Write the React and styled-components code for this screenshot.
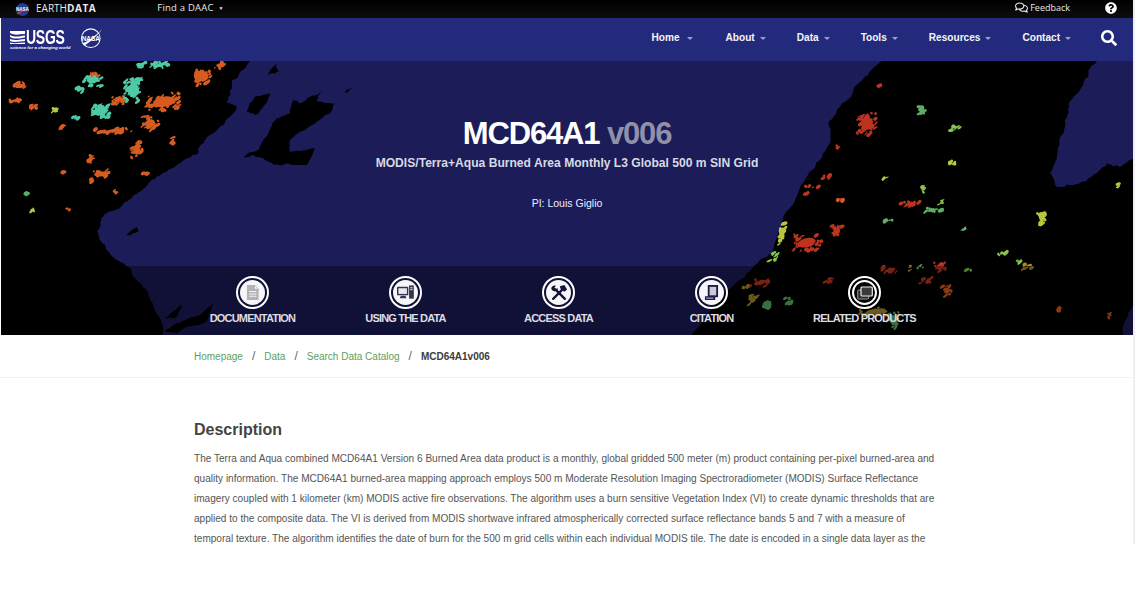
import React from "react";
import styled, { createGlobalStyle } from "styled-components";
import { FaSearch, FaQuestionCircle, FaRegComments } from "react-icons/fa";

const Global = createGlobalStyle`
  html, body { margin: 0; padding: 0; background: #fff; overflow: hidden; }
  body { font-family: "Liberation Sans", Arial, sans-serif; }
`;

const Frame = styled.div`
  display: flex;
  align-items: flex-start;
  width: 1138px;
  height: 610px;
  overflow: hidden;
  background: #fff;
`;
const Page = styled.div`
  flex: 0 0 1133px;
  height: 610px;
  display: flex;
  flex-direction: column;
`;
const Gutter = styled.div`
  flex: 0 0 2px;
  height: 544px;
  background: #efeff1;
`;
const TopBar = styled.div`
  height: 18px;
  flex: none;
  box-sizing: border-box;
  padding: 0 0 3px 15px;
  display: flex;
  align-items: center;
  background: linear-gradient(#000, #0d0d0d);
  color: #e8e8e8;
  font-size: 10px;
`;
const Brand = styled.span`
  display: flex;
  align-items: center;
  gap: 5px;
  font-family: "Open Sans", sans-serif;
  font-size: 10px;
  b { font-weight: 700; letter-spacing: 0.6px; }
`;
const BrandMark = styled.span`
  display: flex;
  margin-top: 3px;
`;
const Daac = styled.span`
  margin-left: 61px;
  font-family: "Open Sans", sans-serif;
  font-size: 9.5px;
  letter-spacing: 0.2px;
  small { font-size: 5px; margin-left: 5px; vertical-align: 1px; }
`;
const Feedback = styled.span`
  margin-left: auto;
  display: flex;
  align-items: center;
  gap: 2px;
  font-family: "Open Sans", sans-serif;
  font-size: 9px;
`;
const Help = styled.span`
  display: flex;
  margin: 0 16px 0 35px;
  color: #fff;
  font-size: 12px;
`;
const MainNav = styled.nav`
  height: 43px;
  flex: none;
  margin-left: 1px;
  box-sizing: border-box;
  padding-bottom: 4px;
  display: flex;
  align-items: center;
  background: #232a7c;
`;
const Logos = styled.div`
  display: flex;
  align-items: center;
  gap: 14px;
  padding-left: 9px;
  margin-right: auto;
`;
const Usgs = styled.div`
  display: flex;
  flex: none;
  flex-direction: column;
  color: #fff;
  width: 56px;
  padding-top: 5px;
`;
const UsgsTop = styled.div`
  display: flex;
  align-items: center;
  gap: 1px;
  font-weight: 700;
  font-size: 20px;
  line-height: 15px;
  letter-spacing: -0.4px;
  svg { flex: none; }
  span { flex: none; width: 40px; display: inline-block; transform: scaleX(0.7); transform-origin: left; }
`;
const UsgsTag = styled.div`
  font-size: 4.4px;
  line-height: 6px;
  font-weight: 700;
  font-style: italic;
  white-space: nowrap;
`;
const Menu = styled.ul`
  list-style: none;
  display: flex;
  margin: 0;
  padding: 0;
  gap: 31px;
`;
const MenuItem = styled.li`
  display: flex;
  align-items: center;
  color: #f4f4f8;
  font-weight: 700;
  font-size: 10.1px;
  margin-right: ${(p) => p.$extra || 0}px;
  &::after {
    content: "";
    margin-left: ${(p) => (p.$extra ? 7 : 5)}px;
    margin-top: 1px;
    border: 3px solid transparent;
    border-top: 3px solid #9ba0c8;
    border-bottom: 0;
  }
`;
const SearchBox = styled.div`
  display: flex;
  align-items: center;
  justify-content: center;
  width: 47px;
  margin-left: 15px;
  color: #fff;
  font-size: 16px;
  box-sizing: border-box;
  padding-right: 2px;
`;
const Hero = styled.header`
  position: relative;
  height: 274px;
  flex: none;
  margin-left: 1px;
  background: #1b1c58;
  display: flex;
  flex-direction: column;
  overflow: hidden;
`;
const MapArt = styled.svg`
  position: absolute;
  inset: 0;
  width: 100%;
  height: 100%;
`;
const Intro = styled.div`
  position: relative;
  flex: 1;
  display: flex;
  flex-direction: column;
  align-items: center;
  color: #fff;
  padding-top: 55px;
`;
const Title = styled.h1`
  margin: 0;
  font-size: 31px;
  line-height: 36px;
  font-weight: 700;
  letter-spacing: -1.15px;
  span { color: #9190ab; }
`;
const Subtitle = styled.div`
  margin-top: 3px;
  font-size: 12.1px;
  line-height: 16px;
  font-weight: 700;
  color: #d9d9e3;
`;
const Pi = styled.div`
  margin-top: 24px;
  font-size: 10.5px;
  line-height: 16px;
  color: #eef;
`;
const Band = styled.div`
  position: relative;
  height: 69px;
  flex: none;
  display: flex;
  padding-left: 175px;
  background: rgba(0, 0, 0, 0.36);
`;
const Tab = styled.div`
  width: 153px;
  display: flex;
  flex-direction: column;
  align-items: center;
  padding-top: 10px;
`;
const Ring = styled.div`
  width: 33px;
  height: 33px;
  box-sizing: border-box;
  border: 2px solid #fff;
  border-radius: 50%;
  padding: 2px;
`;
const Disc = styled.div`
  width: 100%;
  height: 100%;
  box-sizing: border-box;
  border-radius: 50%;
  background: ${(p) => (p.$dark ? "#050505" : "#f6f6f8")};
  border: ${(p) => (p.$dark ? "2px solid #fff" : "0")};
  display: flex;
  align-items: center;
  justify-content: center;
`;
const TabLabel = styled.div`
  margin-top: 1px;
  font-size: 11px;
  line-height: 16px;
  font-weight: 700;
  letter-spacing: -0.82px;
  color: #dcdce2;
  white-space: nowrap;
`;
const Crumbs = styled.div`
  height: 43px;
  flex: none;
  box-sizing: border-box;
  border-bottom: 1px solid #f2f2f2;
  padding-left: 194px;
  display: flex;
  align-items: center;
  gap: 9px;
  font-size: 10px;
`;
const Crumb = styled.a`
  color: #5d9e5d;
`;
const Sep = styled.span`
  color: #666;
  font-size: 12px;
`;
const CrumbNow = styled.b`
  color: #3c3c3c;
`;
const Content = styled.main`
  padding: 42px 0 0 194px;
  flex: 1;
`;
const Heading = styled.h2`
  margin: 0 0 9px;
  font-size: 16px;
  line-height: 20px;
  font-weight: 700;
  color: #444;
`;
const Line = styled.div`
  font-size: 10.07px;
  line-height: 20px;
  color: #555;
  white-space: nowrap;
`;

function rng(seed) {
  let s = seed;
  return () => {
    s = (s * 16807) % 2147483647;
    return s / 2147483647;
  };
}

// coastline vertices taken from the reference, roughened by midpoint displacement
function rough(points, seed, amp = 1.8) {
  const r = rng(seed);
  let pts = points;
  let a = amp;
  for (let level = 0; level < 3; level++) {
    const next = [];
    pts.forEach((p, i) => {
      next.push(p);
      const q = pts[(i + 1) % pts.length];
      const onEdge = p[2] && q[2];
      next.push([
        (p[0] + q[0]) / 2 + (onEdge ? 0 : (r() * 2 - 1) * a),
        (p[1] + q[1]) / 2 + (onEdge ? 0 : (r() * 2 - 1) * a),
        onEdge ? 1 : 0,
      ]);
    });
    pts = next;
    a *= 0.6;
  }
  return "M" + pts.map((p) => `${p[0].toFixed(1)} ${p[1].toFixed(1)}`).join("L") + "Z";
}
const zL = (list) => list.map(([x, y, e]) => [x / 3, 60 + y / 3, e]);
const zR = (list) => list.map(([x, y, e]) => [740 + x / 3, 60 + y / 3, e]);

const LAND = [
  zL([[-6, 0, 1], [755, 0, 1], [735, 25], [695, 60], [690, 100], [680, 125], [710, 140], [690, 170], [640, 220], [610, 250], [595, 280], [530, 315], [470, 350], [445, 370], [420, 395], [385, 420], [360, 445], [315, 462], [300, 500], [297, 535], [320, 570], [380, 620], [400, 650], [440, 690], [450, 720], [470, 760], [490, 800], [485, 830, 1], [-6, 830, 1]]),
  zL([[730, 292], [775, 270], [790, 240], [810, 205], [830, 175], [870, 160], [880, 120], [900, 130], [930, 110], [965, 95], [950, 125], [1005, 130], [990, 160], [950, 185], [900, 215], [870, 240], [870, 275], [945, 265], [920, 315], [860, 310], [825, 315], [790, 295], [760, 285]]),
  zL([[740, 155], [765, 110], [810, 100], [790, 140], [765, 165]]),
  zL([[805, 45], [830, 10], [835, 35]]),
  zL([[1030, 98], [1055, 85], [1045, 97]]),
  zL([[380, 525], [410, 500], [415, 515], [395, 525]]),
  zL([[495, 775], [545, 735], [525, 775]]),
  zL([[600, 765], [640, 730], [620, 785], [560, 800], [530, 822], [490, 815], [530, 790]]),
  zR([[430, 0, 1], [1075, 0, 1], [1045, 50], [1000, 110], [985, 150], [975, 200], [955, 260], [930, 340], [950, 380], [1020, 370], [1060, 345], [1100, 310], [1140, 320], [1185, 295, 1], [1185, 730, 1], [1165, 760], [1150, 830, 1], [-150, 830, 1], [-50, 700], [0, 660], [40, 620], [100, 570], [130, 470], [200, 350], [240, 300], [270, 250], [265, 190], [300, 140], [340, 90], [385, 45]]),
];

const C = { t: "#4fcaa6", o: "#d75c20", r: "#bd3420", g: "#5fae68", y: "#b7c63c", l: "#86c44c", a: "#a88a2e" };
// x, y, spreadX, spreadY, count, colour — zoomed coordinates of the reference
const LEFT = [
  [300, 155, 28, 20, 22, "t"], [400, 90, 28, 35, 24, "t"], [280, 60, 28, 18, 10, "t"], [480, 15, 30, 8, 12, "t"],
  [425, 15, 12, 8, 5, "t"], [240, 90, 10, 8, 4, "t"], [165, 150, 8, 6, 4, "y"], [225, 172, 10, 4, 3, "t"],
  [610, 50, 25, 25, 16, "o"], [490, 125, 50, 28, 24, "o"], [450, 190, 25, 22, 10, "o"], [340, 212, 55, 9, 11, "o"],
  [660, 15, 18, 10, 6, "o"], [355, 118, 18, 14, 9, "o"], [285, 45, 12, 6, 4, "o"], [45, 120, 16, 5, 5, "o"],
  [100, 140, 16, 6, 4, "o"], [185, 200, 8, 6, 4, "o"], [410, 270, 16, 24, 7, "o"], [516, 240, 4, 12, 3, "o"],
  [305, 342, 24, 12, 7, "o"], [270, 300, 8, 14, 4, "o"], [188, 335, 5, 3, 2, "o"], [435, 340, 10, 2, 2, "o"],
  [350, 395, 8, 6, 2, "o"], [205, 447, 5, 3, 2, "o"], [60, 78, 22, 10, 5, "o"], [272, 360, 5, 5, 2, "o"],
  [83, 403, 8, 5, 3, "g"], [100, 450, 6, 3, 2, "y"],
];
const RIGHT = [
  [380, 190, 28, 36, 24, "r"], [420, 75, 3, 3, 1, "r"], [290, 260, 6, 6, 2, "r"], [260, 352, 12, 6, 3, "r"],
  [215, 382, 20, 4, 3, "r"], [200, 402, 10, 3, 2, "r"], [300, 418, 9, 6, 3, "o"], [510, 432, 28, 8, 7, "r"],
  [200, 548, 45, 25, 18, "r"], [290, 510, 16, 14, 6, "r"], [265, 660, 14, 7, 4, "r"], [600, 620, 18, 14, 6, "r"],
  [555, 662, 18, 8, 4, "r"], [450, 630, 28, 10, 5, "r"], [620, 692, 14, 16, 6, "o"], [60, 668, 30, 12, 5, "r"],
  [545, 150, 12, 12, 6, "g"], [645, 205, 14, 6, 4, "l"], [580, 450, 24, 6, 6, "g"], [602, 425, 5, 8, 2, "l"],
  [547, 385, 5, 12, 3, "l"], [670, 508, 8, 3, 2, "g"], [440, 482, 20, 2, 3, "g"], [80, 735, 10, 12, 6, "g"],
  [145, 725, 10, 10, 4, "g"], [785, 580, 14, 5, 3, "l"], [545, 620, 12, 4, 2, "g"], [860, 622, 16, 10, 4, "a"],
  [835, 605, 6, 4, 2, "l"], [905, 470, 14, 24, 5, "y"], [635, 308, 10, 6, 3, "y"], [125, 520, 12, 35, 6, "y"],
  [100, 590, 14, 14, 4, "l"], [1135, 375, 5, 8, 2, "y"], [400, 755, 40, 14, 12, "a"], [460, 780, 18, 28, 7, "g"],
  [958, 750, 6, 5, 2, "o"], [1108, 768, 4, 12, 3, "o"], [15, 680, 8, 4, 2, "a"], [40, 720, 14, 14, 4, "a"],
  [430, 355, 8, 2, 1, "y"], [685, 630, 8, 4, 2, "l"], [510, 625, 8, 10, 2, "a"],
];

function blobs(list, ox, oy, seed) {
  const r = rng(seed);
  const out = [];
  list.forEach(([x, y, sx, sy, n, c], i) => {
    if (n >= 5) {
      const cx = ox + x / 3;
      const cy = oy + y / 3;
      out.push(
        <ellipse
          key={`${seed}-core-${i}`}
          cx={cx}
          cy={cy}
          rx={(sx / 3) * 0.62}
          ry={(sy / 3) * 0.55}
          transform={`rotate(${-20 + r() * 10} ${cx} ${cy})`}
          fill={C[c]}
        />
      );
    }
    for (let k = 0; k < n * 2; k++) {
      const px = ox + (x + (r() * 2 - 1) * sx) / 3;
      const py = oy + (y + (r() * 2 - 1) * sy) / 3;
      out.push(
        <ellipse
          key={`${seed}-${i}-${k}`}
          cx={px}
          cy={py}
          rx={0.9 + r() * 2.4}
          ry={0.6 + r() * 1.4}
          transform={`rotate(${-55 + r() * 40} ${px} ${py})`}
          fill={C[c]}
        />
      );
    }
  });
  return out;
}

const GlobeMark = ({ size = 16, outline }) => (
  <svg width={size} height={size} viewBox="0 0 32 32">
    <circle cx="15" cy="17" r="13" fill={outline ? "none" : "#1d3f94"} stroke={outline ? "#fff" : "none"} strokeWidth="1.4" />
    <path d="M3 24C12 21 22 13 31 4 24 13 15 22 6 27Z" fill={outline ? "#fff" : "#d0342c"} />
    <text x="15" y="20.5" textAnchor="middle" fontSize="9" fontWeight="700" fill="#fff" fontFamily="Liberation Sans">NASA</text>
  </svg>
);

const DocIcon = () => (
  <svg width="15" height="17" viewBox="0 0 16 18">
    <path d="M2 1H10L14.5 5.5V17H2Z" fill="#b4b4b8" />
    <path d="M10 1V5.5H14.5Z" fill="#fff" stroke="#888" strokeWidth="0.5" />
    <path d="M4.5 8H12M4.5 10.5H12M4.5 13H12" stroke="#f4f4f4" strokeWidth="1.1" />
  </svg>
);
const ComputerIcon = () => (
  <svg width="19" height="17" viewBox="0 0 20 18">
    <rect x="1" y="3" width="12" height="9" rx="1" fill="#33334a" />
    <rect x="2.5" y="4.5" width="9" height="6" fill="#e8e8ee" />
    <path d="M4 15H11L10 12.5H5Z" fill="#33334a" />
    <rect x="13.8" y="1.5" width="5" height="14" fill="#33334a" />
    <path d="M15 4H17.6M15 6H17.6" stroke="#eee" strokeWidth="1" />
  </svg>
);
const ToolsIcon = () => (
  <svg width="18" height="18" viewBox="0 0 20 20">
    <path d="M3.5 16.5L14.5 5.5" stroke="#14143a" strokeWidth="2.6" strokeLinecap="round" />
    <path d="M11 2.5L16 1 19 6 16 8.5 11.5 5Z" fill="#14143a" />
    <path d="M16.5 16.5L6 6" stroke="#14143a" strokeWidth="2.6" strokeLinecap="round" />
    <path d="M1.5 4.5C2 2.5 4.5 1 6.5 2L5 4 6.8 5.8 8.6 4.4C9.2 6.6 7 8.8 4.5 8 2.8 7.6 1.2 6.4 1.5 4.5Z" fill="#14143a" />
  </svg>
);
const CiteIcon = () => (
  <svg width="15" height="17" viewBox="0 0 16 18">
    <path d="M4 1H15V14H4Z" fill="#1c1c50" />
    <path d="M6 3H13V12H6Z" fill="#c9c9d8" />
    <path d="M1 13H12V17H1Z" fill="#1c1c50" />
    <path d="M2.5 14.5H10V15.5H2.5Z" fill="#c9c9d8" />
  </svg>
);
const StackIcon = () => (
  <svg width="16" height="14" viewBox="0 0 16 14">
    <rect x="0.7" y="4" width="11" height="9" rx="1" fill="#2a2a2a" stroke="#9b9b9b" />
    <rect x="4" y="1" width="11.3" height="9" rx="1" fill="#3a3a3a" stroke="#ececec" strokeWidth="1.2" />
  </svg>
);

const tabs = [
  { label: "DOCUMENTATION", icon: <DocIcon /> },
  { label: "USING THE DATA", icon: <ComputerIcon /> },
  { label: "ACCESS DATA", icon: <ToolsIcon /> },
  { label: "CITATION", icon: <CiteIcon /> },
  { label: "RELATED PRODUCTS", icon: <StackIcon />, dark: true },
];
const menu = ["Home", "About", "Data", "Tools", "Resources", "Contact"];
const lines = [
  "The Terra and Aqua combined MCD64A1 Version 6 Burned Area data product is a monthly, global gridded 500 meter (m) product containing per-pixel burned-area and",
  "quality information. The MCD64A1 burned-area mapping approach employs 500 m Moderate Resolution Imaging Spectroradiometer (MODIS) Surface Reflectance",
  "imagery coupled with 1 kilometer (km) MODIS active fire observations. The algorithm uses a burn sensitive Vegetation Index (VI) to create dynamic thresholds that are",
  "applied to the composite data. The VI is derived from MODIS shortwave infrared atmospherically corrected surface reflectance bands 5 and 7 with a measure of",
  "temporal texture. The algorithm identifies the date of burn for the 500 m grid cells within each individual MODIS tile. The date is encoded in a single data layer as the",
];

export default function App() {
  return (
    <Frame>
      <Global />
      <Page>
        <TopBar>
          <Brand>
            <BrandMark>
              <GlobeMark />
            </BrandMark>
            <span>
              EARTH<b>DATA</b>
            </span>
          </Brand>
          <Daac>
            Find a DAAC<small>▼</small>
          </Daac>
          <Feedback>
            <FaRegComments size={13} /> Feedback
          </Feedback>
          <Help>
            <FaQuestionCircle />
          </Help>
        </TopBar>
        <MainNav>
          <Logos>
            <Usgs>
              <UsgsTop>
                <svg width="15" height="15" viewBox="0 0 15 15">
                  <path d="M0 1H15V4C10 4 5 6 0 3ZM0 5C5 8 10 6 15 5.5V7.5C10 8 5 10 0 7ZM0 9C5 11 10 9.5 15 9V11C10 11 5 13 0 11ZM0 12.5C5 14 10 12.5 15 12.5V14H0Z" fill="#fff" />
                </svg>
                <span>USGS</span>
              </UsgsTop>
              <UsgsTag>science for a changing world</UsgsTag>
            </Usgs>
            <GlobeMark size={23} outline />
          </Logos>
          <Menu>
            {menu.map((m, i) => (
              <MenuItem key={m} $extra={i === 0 ? 2 : 0}>
                {m}
              </MenuItem>
            ))}
          </Menu>
          <SearchBox>
            <FaSearch />
          </SearchBox>
        </MainNav>
        <Hero>
          <MapArt viewBox="1 61 1132 274" preserveAspectRatio="none">
            <defs>
              <filter id="soft" x="-5%" y="-5%" width="110%" height="110%">
                <feGaussianBlur stdDeviation="0.4" />
              </filter>
            </defs>
            <g filter="url(#soft)">
              {LAND.map((pts, i) => (
                <path key={i} d={rough(pts, 1201 + i * 77, i === 0 || i === 8 ? 2.2 : 1.3)} fill="#000" />
              ))}
              {blobs(LEFT, 0, 60, 4711)}
              {blobs(RIGHT, 740, 60, 9973)}
            </g>
          </MapArt>
          <Intro>
            <Title>
              MCD64A1 <span>v006</span>
            </Title>
            <Subtitle>MODIS/Terra+Aqua Burned Area Monthly L3 Global 500 m SIN Grid</Subtitle>
            <Pi>PI: Louis Giglio</Pi>
          </Intro>
          <Band>
            {tabs.map((t) => (
              <Tab key={t.label}>
                <Ring>
                  <Disc $dark={t.dark}>{t.icon}</Disc>
                </Ring>
                <TabLabel>{t.label}</TabLabel>
              </Tab>
            ))}
          </Band>
        </Hero>
        <Crumbs>
          <Crumb>Homepage</Crumb>
          <Sep>/</Sep>
          <Crumb>Data</Crumb>
          <Sep>/</Sep>
          <Crumb>Search Data Catalog</Crumb>
          <Sep>/</Sep>
          <CrumbNow>MCD64A1v006</CrumbNow>
        </Crumbs>
        <Content>
          <Heading>Description</Heading>
          {lines.map((l) => (
            <Line key={l}>{l}</Line>
          ))}
        </Content>
      </Page>
      <Gutter />
    </Frame>
  );
}
